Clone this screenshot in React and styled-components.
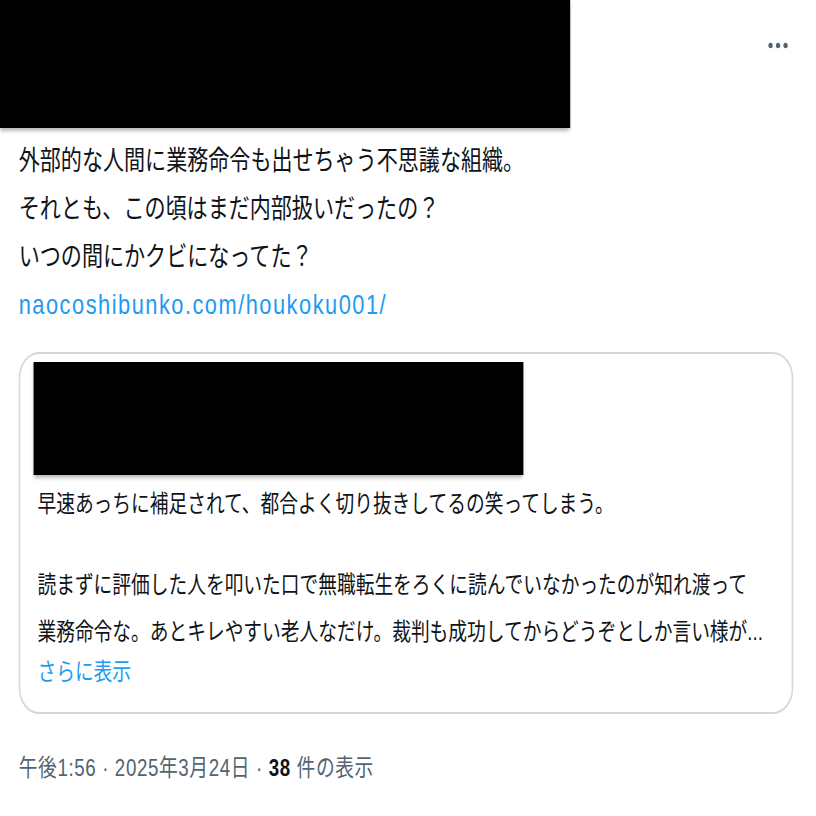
import React from "react";
import styled, { createGlobalStyle } from "styled-components";

const GlobalStyle = createGlobalStyle`
  html, body {
    margin: 0;
    padding: 0;
    background: #ffffff;
    overflow: hidden;
  }
`;

/* The reference capture is horizontally compressed; the page is laid out
   at its natural width and the whole stage is narrowed to fit 816px. */
const Stage = styled.div`
  width: 1046px;
  transform: scaleX(0.78);
  transform-origin: 0 0;
  font-family: "Liberation Sans", "Noto Sans CJK JP", sans-serif;
  color: #0f1419;
`;

const Header = styled.header`
  display: flex;
  justify-content: space-between;
  align-items: flex-start;
  padding-right: 32px;
`;

const Redaction = styled.div`
  width: ${(p) => p.$w}px;
  height: ${(p) => p.$h}px;
  background: #000000;
  box-shadow: 0 3px 4px rgba(0, 0, 0, 0.28);
  flex: none;
`;

const MoreButton = styled.button`
  margin-top: 29px;
  width: 33px;
  height: 33px;
  padding: 0;
  border: none;
  background: transparent;
  color: #536471;
  display: flex;
  align-items: center;
  justify-content: center;
  svg {
    width: 33px;
    height: 33px;
  }
`;

const Body = styled.main`
  padding: 9px 29px 0 24px;
`;

const TweetText = styled.div`
  font-size: 27px;
  line-height: 48px;
`;

const Line = styled.p`
  margin: 0;
  white-space: nowrap;
`;

const Link = styled.a`
  display: block;
  color: #1d9bf0;
  font-size: 28px;
  line-height: 48px;
  letter-spacing: 1.9px;
  text-decoration: none;
`;

const Card = styled.section`
  margin-top: 23px;
  border: 2px solid #cfd9de;
  border-radius: 26px;
  padding: 8px 17px 24px;
`;

const CardText = styled.div`
  margin-left: 5px;
  font-size: 24px;
`;

const Para = styled.p`
  margin: ${(p) => (p.$first ? "5px 0 0" : "34px 0 0")};
  line-height: 47px;
  white-space: nowrap;
`;

const ShowMore = styled.span`
  display: block;
  color: #1d9bf0;
  line-height: 33px;
`;

const Meta = styled.div`
  margin-top: 38px;
  font-size: 24px;
  line-height: 32px;
  letter-spacing: 0.8px;
  color: #536471;
`;

const Count = styled.strong`
  color: #0f1419;
  font-weight: 700;
`;

const MoreIcon = () => (
  <svg viewBox="0 0 24 24" fill="currentColor" aria-hidden="true">
    <circle cx="5" cy="12" r="2" />
    <circle cx="12" cy="12" r="2" />
    <circle cx="19" cy="12" r="2" />
  </svg>
);

export default function App() {
  return (
    <>
      <GlobalStyle />
      <Stage>
        <Header>
          <Redaction $w={731} $h={128} />
          <MoreButton aria-label="More">
            <MoreIcon />
          </MoreButton>
        </Header>
        <Body>
          <TweetText>
            <Line>外部的な人間に業務命令も出せちゃう不思議な組織。</Line>
            <Line>それとも、この頃はまだ内部扱いだったの？</Line>
            <Line>いつの間にかクビになってた？</Line>
            <Link href="#">naocoshibunko.com/houkoku001/</Link>
          </TweetText>
          <Card>
            <Redaction $w={628} $h={113} />
            <CardText>
              <Para $first>早速あっちに補足されて、都合よく切り抜きしてるの笑ってしまう。</Para>
              <Para>
                読まずに評価した人を叩いた口で無職転生をろくに読んでいなかったのが知れ渡って
                <br />
                業務命令な。あとキレやすい老人なだけ。裁判も成功してからどうぞとしか言い様が...
              </Para>
              <ShowMore>さらに表示</ShowMore>
            </CardText>
          </Card>
          <Meta>
            午後1:56 · 2025年3月24日 · <Count>38</Count> 件の表示
          </Meta>
        </Body>
      </Stage>
    </>
  );
}
